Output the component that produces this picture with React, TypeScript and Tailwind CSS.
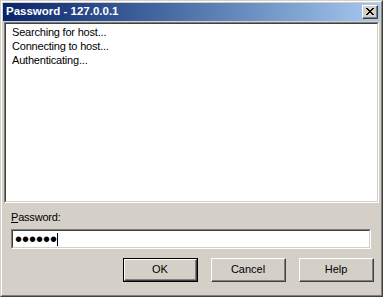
import React from 'react';

const font = { fontFamily: '"Liberation Sans", Arial, sans-serif' };

const CloseButton = () => (
  <div className="w-[16px] h-[14px] bg-[#d4d0c8] border-t border-l border-t-white border-l-white border-r border-b border-r-[#404040] border-b-[#404040]">
    <div className="w-full h-full border-r border-b border-r-[#808080] border-b-[#808080] flex items-center justify-center">
      <svg width="8" height="7" viewBox="0 0 8 7" shapeRendering="crispEdges">
        <path d="M0 0h2v1h-2zM6 0h2v1h-2zM1 1h2v1h-2zM5 1h2v1h-2zM2 2h4v1h-4zM3 3h2v1h-2zM2 4h4v1h-4zM1 5h2v1h-2zM5 5h2v1h-2zM0 6h2v1h-2zM6 6h2v1h-2z" fill="#000" />
      </svg>
    </div>
  </div>
);

const Button = ({ label, isDefault }: { label: string; isDefault?: boolean }) => (
  <div className={isDefault ? 'w-[75px] h-[24px] border border-black' : 'w-[75px] h-[24px]'}>
    <div className="w-full h-full border-t border-l border-t-white border-l-white border-r border-b border-r-[#404040] border-b-[#404040]">
      <div className="w-full h-full border-r border-b border-r-[#808080] border-b-[#808080] flex items-center justify-center text-[11px] text-black">
        {label}
      </div>
    </div>
  </div>
);

export default function App() {
  return (
    <div style={font} className="w-[383px] h-[297px] bg-[#d4d0c8] border border-t-[#d4d0c8] border-l-[#d4d0c8] border-r-[#404040] border-b-[#404040]">
      <div className="w-full h-full border border-t-white border-l-white border-r-[#808080] border-b-[#808080] p-px flex flex-col">
        {/* title bar */}
        <div className="h-[18px] flex items-center justify-between pl-[3px] pr-[2px] bg-gradient-to-r from-[#0a246a] to-[#a6caf0]">
          <span className="text-white font-bold text-[11.5px] leading-none">Password - 127.0.0.1</span>
          <CloseButton />
        </div>

        {/* log box */}
        <div className="mt-px ml-px mr-px h-[181px] border-t border-l border-t-[#808080] border-l-[#808080] border-r border-b border-r-white border-b-white">
          <div className="w-full h-full bg-white border-t border-l border-t-[#404040] border-l-[#404040] border-r border-b border-r-[#d4d0c8] border-b-[#d4d0c8] pl-[6px] pt-[1px] text-[11px] leading-[14px] tracking-[-0.2px] text-black">
            <div>Searching for host...</div>
            <div>Connecting to host...</div>
            <div>Authenticating...</div>
          </div>
        </div>

        {/* password entry */}
        <div className="flex flex-col pl-[8px] pr-[6px] pt-[7px]">
          <div className="text-[11px] leading-[14px] tracking-[-0.2px] text-black">
            <span className="underline underline-offset-1">P</span>assword:
          </div>
          <div className="mt-[5px] w-[360px] h-[20px] border-t border-l border-t-[#808080] border-l-[#808080] border-r border-b border-r-white border-b-white">
            <div className="w-full h-full bg-white border-t border-l border-t-[#404040] border-l-[#404040] border-r border-b border-r-[#d4d0c8] border-b-[#d4d0c8] flex items-center pl-[2px]">
              <span className="text-[20px] leading-none text-black">••••••</span>
              <span className="w-px h-[13px] bg-black" />
            </div>
          </div>
          <div className="mt-[9px] flex justify-end gap-[13px]">
            <Button label="OK" isDefault />
            <Button label="Cancel" />
            <Button label="Help" />
          </div>
        </div>
      </div>
    </div>
  );
}
